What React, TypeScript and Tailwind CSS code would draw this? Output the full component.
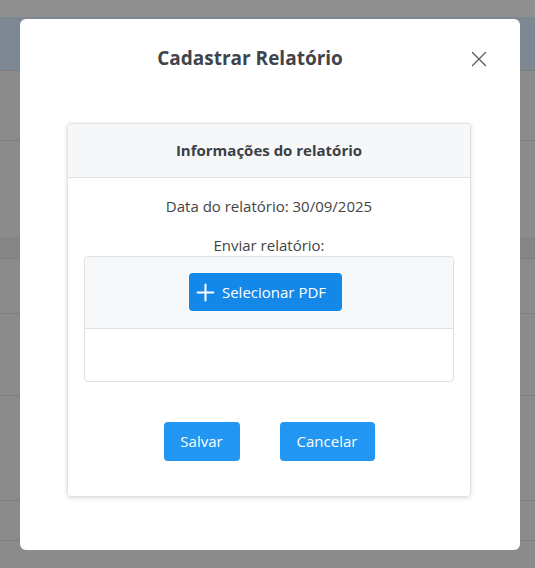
import { X, Plus } from "lucide-react";

const rows = [70, 140, 237, 258, 313, 395, 500, 540];

const Backdrop = () => (
  <div className="absolute inset-0 bg-[#8b8b8b]">
    <div className="h-[17px] bg-[#8f8f8f]" />
    <div className="h-[53px] bg-[#7d8893]" />
    {rows.map((y) => (
      <div
        key={y}
        className="absolute left-0 right-0 h-px bg-[#7e7e7e]"
        style={{ top: y }}
      />
    ))}
    <div className="absolute left-0 right-0 top-[237px] h-[21px] bg-[#858585]" />
  </div>
);

export default function App() {
  return (
    <div
      className="relative w-[535px] h-[568px] overflow-hidden"
      style={{ fontFamily: '"Open Sans", "Noto Sans", sans-serif' }}
    >
      <Backdrop />
      <div className="absolute left-[20px] top-[19px] w-[500px] h-[531px] bg-white rounded-md">
        <div className="relative h-[80px] flex items-center justify-center">
          <h2 className="text-[19px] font-bold text-[#3f444b] -mt-[1px] pr-[40px]">
            Cadastrar Relatório
          </h2>
          <button className="absolute right-[28px] top-[27px] text-[#5f6368]">
            <X className="w-[26px] h-[26px]" strokeWidth={1.3} />
          </button>
        </div>
        <div className="ml-[47px] mr-[49px] mt-[24px] h-[374px] border border-[#dfe1e5] rounded shadow-[0_1px_4px_rgba(0,0,0,0.15)] flex flex-col">
          <div className="h-[54px] bg-[#f6f7f9] border-b border-[#dfe1e5] flex items-center justify-center rounded-t">
            <span className="text-[15px] font-bold text-[#3a3f45]">Informações do relatório</span>
          </div>
          <div className="px-[16px] pt-[17px] flex flex-col items-center text-[#444] text-[15px]">
            <p className="leading-[22px]">Data do relatório: 30/09/2025</p>
            <p className="leading-[22px] mt-[17px]">Enviar relatório:</p>
            <div className="w-full border border-[#dfe1e5] rounded flex flex-col">
              <div className="h-[72px] bg-[#f7f8fa] border-b border-[#dfe1e5] flex justify-center pt-[16px] pr-[7px] rounded-t">
                <button className="h-[38px] pl-[3px] pr-[16px] flex items-center gap-[3px] bg-[#1488e8] text-white text-[15px] rounded">
                  <Plus className="w-[27px] h-[27px]" strokeWidth={1.8} />
                  Selecionar PDF
                </button>
              </div>
              <div className="h-[52px]" />
            </div>
            <div className="flex gap-[40px] mt-[40px]">
              <button className="w-[76px] h-[39px] bg-[#2196f3] text-white text-[15px] rounded">Salvar</button>
              <button className="w-[95px] h-[39px] bg-[#2196f3] text-white text-[15px] rounded">Cancelar</button>
            </div>
          </div>
        </div>
      </div>
    </div>
  );
}
